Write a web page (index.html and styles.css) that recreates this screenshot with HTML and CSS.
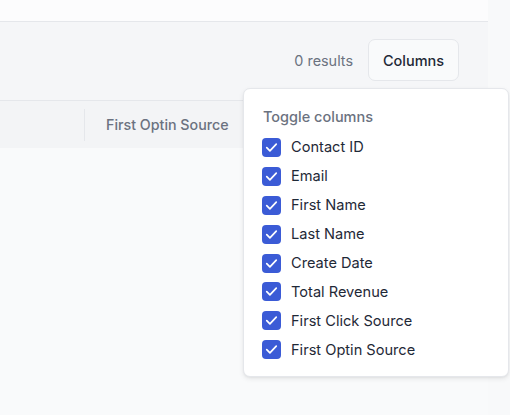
FILE: index.html
```html
<!DOCTYPE html>
<html>
<head>
<meta charset="utf-8">
<link rel="stylesheet" href="styles.css">
</head>
<body>
<div class="page">
  <div class="main">
    <div class="topbar"></div>
    <div class="toolbar">
      <span class="results">0 results</span>
      <button class="btn">Columns</button>
    </div>
    <div class="thead">
      <div class="th th-first"></div>
      <div class="th">First Optin Source</div>
    </div>
    <div class="tbody"></div>
  </div>
  <div class="menu">
    <div class="menu-title">Toggle columns</div>
    <ul class="menu-list">
      <li class="item"><span class="cb"><svg viewBox="0 0 18 18"><path d="M4.5 9.2l3 3 6-6.4"/></svg></span>Contact ID</li>
      <li class="item"><span class="cb"><svg viewBox="0 0 18 18"><path d="M4.5 9.2l3 3 6-6.4"/></svg></span>Email</li>
      <li class="item"><span class="cb"><svg viewBox="0 0 18 18"><path d="M4.5 9.2l3 3 6-6.4"/></svg></span>First Name</li>
      <li class="item"><span class="cb"><svg viewBox="0 0 18 18"><path d="M4.5 9.2l3 3 6-6.4"/></svg></span>Last Name</li>
      <li class="item"><span class="cb"><svg viewBox="0 0 18 18"><path d="M4.5 9.2l3 3 6-6.4"/></svg></span>Create Date</li>
      <li class="item"><span class="cb"><svg viewBox="0 0 18 18"><path d="M4.5 9.2l3 3 6-6.4"/></svg></span>Total Revenue</li>
      <li class="item"><span class="cb"><svg viewBox="0 0 18 18"><path d="M4.5 9.2l3 3 6-6.4"/></svg></span>First Click Source</li>
      <li class="item"><span class="cb"><svg viewBox="0 0 18 18"><path d="M4.5 9.2l3 3 6-6.4"/></svg></span>First Optin Source</li>
    </ul>
  </div>
</div>
</body>
</html>
```
FILE: styles.css
```css
html, body {
  margin: 0;
  padding: 0;
}
body {
  background: #f8f9fa;
  font-family: Inter, "Noto Sans", sans-serif;
  width: 510px;
  height: 415px;
  overflow: hidden;
}
.page {
  position: relative;
  width: 510px;
  height: 415px;
}
.main {
  width: 488px;
  height: 415px;
  display: flex;
  flex-direction: column;
}
.topbar {
  height: 22px;
  background: #fcfcfd;
  border-bottom: 1px solid #e5e7eb;
  box-sizing: border-box;
}
.toolbar {
  height: 78px;
  background: #f5f6f8;
  display: flex;
  align-items: center;
  justify-content: flex-end;
  padding-right: 29px;
  gap: 15px;
  box-sizing: border-box;
  padding-bottom: 2px;
}
.results {
  font-size: 14.4px;
  color: #6b7280;
}
.btn {
  height: 42px;
  width: 91px;
  border: 1px solid #e5e7eb;
  border-radius: 7px;
  background: #f9fafb;
  font-family: inherit;
  font-size: 14.5px;
  font-weight: 500;
  color: #1f2937;
  padding: 0;
}
.thead {
  height: 48px;
  background: #f3f4f6;
  border-top: 1px solid #e5e7eb;
  box-sizing: border-box;
  display: flex;
  align-items: center;
}
.th {
  font-size: 14.25px;
  font-weight: 500;
  color: #6b7280;
  padding-left: 21px;
}
.th-first {
  width: 85px;
  height: 32px;
  padding: 0;
  border-right: 1px solid #e5e7eb;
  box-sizing: border-box;
}
.tbody {
  flex: 1;
  background: #f9fafb;
}
.menu {
  position: absolute;
  left: 243px;
  top: 88px;
  width: 266px;
  height: 289px;
  box-sizing: border-box;
  background: #ffffff;
  border: 1px solid #e5e7eb;
  border-radius: 7px;
  box-shadow: 0 2px 5px rgba(0,0,0,0.08), 0 1px 2px rgba(0,0,0,0.04);
  padding: 18px 18px 0 18px;
}
.menu-title {
  font-size: 14.5px;
  line-height: 20px;
  color: #6b7280;
  font-weight: 500;
  padding-left: 1px;
  margin-bottom: 6px;
}
.menu-list {
  list-style: none;
  margin: 0;
  padding: 0;
}
.item {
  display: flex;
  align-items: center;
  height: 28.9px;
  font-size: 14.6px;
  font-weight: 400;
  color: #1f2937;
}
.cb {
  width: 19px;
  height: 19px;
  border-radius: 4px;
  background: #3b5bd6;
  margin-right: 10px;
  display: flex;
  flex-shrink: 0;
}
.cb svg {
  width: 19px;
  height: 19px;
  fill: none;
  stroke: #ffffff;
  stroke-width: 1.6;
  stroke-linecap: round;
  stroke-linejoin: round;
}
```
